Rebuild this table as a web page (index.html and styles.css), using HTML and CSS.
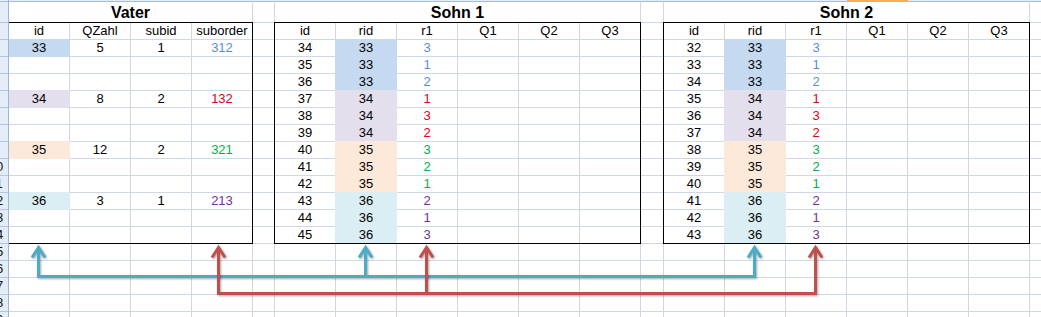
FILE: index.html
```html
<!DOCTYPE html>
<html lang="de">
<head>
<meta charset="utf-8">
<title>Vater / Sohn</title>
<link rel="stylesheet" href="styles.css">
</head>
<body>
<div class="sheet">
  <div class="rowhead">
    <div class="strip"></div>
    <div class="rh rh-title"><span>1</span></div>
    <div class="rh"><span>2</span></div>
    <div class="rh"><span>3</span></div>
    <div class="rh"><span>4</span></div>
    <div class="rh"><span>5</span></div>
    <div class="rh"><span>6</span></div>
    <div class="rh"><span>7</span></div>
    <div class="rh"><span>8</span></div>
    <div class="rh"><span>9</span></div>
    <div class="rh"><span>10</span></div>
    <div class="rh"><span>11</span></div>
    <div class="rh"><span>12</span></div>
    <div class="rh"><span>13</span></div>
    <div class="rh"><span>14</span></div>
    <div class="rh"><span>15</span></div>
    <div class="rh"><span>16</span></div>
    <div class="rh"><span>17</span></div>
    <div class="rh"><span>18</span></div>
    <div class="rh"><span>19</span></div>
  </div>

  <section class="block vater">
    <div class="strip"></div>
    <div class="title">Vater</div>
    <table class="grid">
      <tr><td>id</td><td>QZahl</td><td>subid</td><td>suborder</td></tr>
      <tr><td class="f b">33</td><td>5</td><td>1</td><td class="tb">312</td></tr>
      <tr><td></td><td></td><td></td><td></td></tr>
      <tr><td></td><td></td><td></td><td></td></tr>
      <tr><td class="f p">34</td><td>8</td><td>2</td><td class="tr">132</td></tr>
      <tr><td></td><td></td><td></td><td></td></tr>
      <tr><td></td><td></td><td></td><td></td></tr>
      <tr><td class="f o">35</td><td>12</td><td>2</td><td class="tg">321</td></tr>
      <tr><td></td><td></td><td></td><td></td></tr>
      <tr><td></td><td></td><td></td><td></td></tr>
      <tr><td class="f c">36</td><td>3</td><td>1</td><td class="tp">213</td></tr>
      <tr><td></td><td></td><td></td><td></td></tr>
      <tr><td></td><td></td><td></td><td></td></tr>
    </table>
    <div class="below"></div>
  </section>

  <div class="gap gap-e">
    <div class="strip"></div>
    <div class="gap-title"></div>
    <div class="gap-body"></div>
  </div>

  <section class="block sohn">
    <div class="strip"></div>
    <div class="title">Sohn 1</div>
    <table class="grid">
      <tr><td>id</td><td>rid</td><td>r1</td><td>Q1</td><td>Q2</td><td>Q3</td></tr>
      <tr><td>34</td><td class="f b">33</td><td class="tb">3</td><td></td><td></td><td></td></tr>
      <tr><td>35</td><td class="f b">33</td><td class="tb">1</td><td></td><td></td><td></td></tr>
      <tr><td>36</td><td class="f b">33</td><td class="tb">2</td><td></td><td></td><td></td></tr>
      <tr><td>37</td><td class="f p">34</td><td class="tr">1</td><td></td><td></td><td></td></tr>
      <tr><td>38</td><td class="f p">34</td><td class="tr">3</td><td></td><td></td><td></td></tr>
      <tr><td>39</td><td class="f p">34</td><td class="tr">2</td><td></td><td></td><td></td></tr>
      <tr><td>40</td><td class="f o">35</td><td class="tg">3</td><td></td><td></td><td></td></tr>
      <tr><td>41</td><td class="f o">35</td><td class="tg">2</td><td></td><td></td><td></td></tr>
      <tr><td>42</td><td class="f o">35</td><td class="tg">1</td><td></td><td></td><td></td></tr>
      <tr><td>43</td><td class="f c">36</td><td class="tp">2</td><td></td><td></td><td></td></tr>
      <tr><td>44</td><td class="f c">36</td><td class="tp">1</td><td></td><td></td><td></td></tr>
      <tr><td>45</td><td class="f c">36</td><td class="tp">3</td><td></td><td></td><td></td></tr>
    </table>
    <div class="below"></div>
  </section>

  <div class="gap gap-l">
    <div class="strip"></div>
    <div class="gap-title"></div>
    <div class="gap-body"></div>
  </div>

  <section class="block sohn">
    <div class="strip strip-sel"></div>
    <div class="title">Sohn 2</div>
    <table class="grid">
      <tr><td>id</td><td>rid</td><td>r1</td><td>Q1</td><td>Q2</td><td>Q3</td></tr>
      <tr><td>32</td><td class="f b">33</td><td class="tb">3</td><td></td><td></td><td></td></tr>
      <tr><td>33</td><td class="f b">33</td><td class="tb">1</td><td></td><td></td><td></td></tr>
      <tr><td>34</td><td class="f b">33</td><td class="tb">2</td><td></td><td></td><td></td></tr>
      <tr><td>35</td><td class="f p">34</td><td class="tr">1</td><td></td><td></td><td></td></tr>
      <tr><td>36</td><td class="f p">34</td><td class="tr">3</td><td></td><td></td><td></td></tr>
      <tr><td>37</td><td class="f p">34</td><td class="tr">2</td><td></td><td></td><td></td></tr>
      <tr><td>38</td><td class="f o">35</td><td class="tg">3</td><td></td><td></td><td></td></tr>
      <tr><td>39</td><td class="f o">35</td><td class="tg">2</td><td></td><td></td><td></td></tr>
      <tr><td>40</td><td class="f o">35</td><td class="tg">1</td><td></td><td></td><td></td></tr>
      <tr><td>41</td><td class="f c">36</td><td class="tp">2</td><td></td><td></td><td></td></tr>
      <tr><td>42</td><td class="f c">36</td><td class="tp">1</td><td></td><td></td><td></td></tr>
      <tr><td>43</td><td class="f c">36</td><td class="tp">3</td><td></td><td></td><td></td></tr>
    </table>
    <div class="below"></div>
  </section>

  <div class="gap rest">
    <div class="strip"></div>
    <div class="gap-title"></div>
    <div class="gap-body"></div>
  </div>

  <svg class="arrows" width="1041" height="317" viewBox="0 0 1041 317" aria-hidden="true">
    <g class="arrow arrow-cyan">
      <path d="M38.5 248 V276.5 H754.5 V248"/>
      <path d="M365.5 276.5 V248"/>
      <path d="M32 257.5 L38.5 247.5 L45 257.5"/>
      <path d="M359 257.5 L365.5 247.5 L372 257.5"/>
      <path d="M748 257.5 L754.5 247.5 L761 257.5"/>
    </g>
    <g class="arrow arrow-red">
      <path d="M218.5 248 V293.5 H815.5 V248"/>
      <path d="M426.5 293.5 V248"/>
      <path d="M212 257.5 L218.5 247.5 L225 257.5"/>
      <path d="M420 257.5 L426.5 247.5 L433 257.5"/>
      <path d="M809 257.5 L815.5 247.5 L822 257.5"/>
    </g>
  </svg>
</div>
</body>
</html>
```

FILE: styles.css
```css
html, body {
  margin: 0;
  padding: 0;
  background: #ffffff;
}

body {
  font-family: "Liberation Sans", Arial, sans-serif;
  font-size: 13px;
  color: #000000;
}

.sheet {
  position: relative;
  display: flex;
  width: 1041px;
  height: 317px;
  overflow: hidden;
  background: #ffffff;
}

/* column-header remnant at the very top */
.strip {
  height: 1px;
  flex: none;
  background: #e4ecf7;
}

.strip-sel {
  background: linear-gradient(to right, #e4ecf7 0 184px, #f5b14f 184px 245px, #e4ecf7 245px);
}

/* row headers (only their right edge is visible) */
.rowhead {
  flex: none;
  width: 9px;
  box-sizing: border-box;
  border-right: 1px solid #9eb6ce;
  background: #e4ecf7;
  display: flex;
  flex-direction: column;
}

.rh {
  flex: none;
  height: 17px;
  box-sizing: border-box;
  border-bottom: 1px solid #b4c6dc;
  display: flex;
  justify-content: flex-end;
  overflow: hidden;
}

.rh span {
  flex: none;
  width: 24px;
  text-align: center;
  line-height: 16px;
  font-size: 13px;
  color: #111111;
}

.rh-title {
  height: 22px;
  border-top: 1px solid #a9bcd4;
}

/* table blocks */
.block {
  flex: none;
  display: flex;
  flex-direction: column;
}

.vater { width: 244px; }
.sohn { width: 367px; }

.title {
  flex: none;
  height: 21px;
  box-sizing: border-box;
  border-top: 1px solid #a9bcd4;
  padding-top: 1px;
  line-height: 19px;
  text-align: center;
  font-size: 16px;
  font-weight: bold;
}

.vater .title { border-right: 1px solid #d0d7e5; }
.sohn .title {
  border-left: 1px solid #d0d7e5;
  border-right: 1px solid #d0d7e5;
}

.grid {
  flex: none;
  box-sizing: border-box;
  border-collapse: separate;
  border-spacing: 0;
  table-layout: fixed;
  border: 1px solid #000000;
}

.vater .grid {
  width: 244px;
  border-left: none;
}

.sohn .grid { width: 367px; }

.grid td {
  box-sizing: border-box;
  width: 61px;
  height: 17px;
  padding: 0;
  border-right: 1px solid #d0d7e5;
  border-bottom: 1px solid #d0d7e5;
  text-align: center;
  line-height: 16px;
  font-size: 13px;
  white-space: nowrap;
  overflow: hidden;
}

.grid td:last-child {
  width: 60px;
  border-right: none;
}

.grid tr:last-child td {
  height: 16px;
  border-bottom: none;
}

/* filled cells hide the surrounding gridlines */
.f.b { --fill: #c5d9f1; }
.f.p { --fill: #e4dfec; }
.f.o { --fill: #fde9d9; }
.f.c { --fill: #daeef3; }

.grid td.f {
  background: var(--fill);
  border-right-color: var(--fill);
  border-bottom-color: var(--fill);
  box-shadow: -1px 0 0 var(--fill), 0 -1px 0 var(--fill), -1px -1px 0 var(--fill);
}

.vater .grid td.f {
  box-shadow: 0 -1px 0 var(--fill);
}

.grid tr:last-child td.f { border-bottom: none; }

/* text colours */
.tb { color: #558ed5; }
.tr { color: #e2001a; }
.tg { color: #00b050; }
.tp { color: #7030a0; }

/* empty rows below the tables */
.below {
  flex: 1;
  background-image:
    linear-gradient(to top, #d0d7e5 1px, transparent 1px),
    linear-gradient(to left, #d0d7e5 1px, transparent 1px);
  background-size: 100% 17px, 61px 100%;
}

.sohn .below { border-left: 1px solid #d0d7e5; }

/* narrow spacer columns */
.gap {
  flex: none;
  display: flex;
  flex-direction: column;
}

.gap-e { width: 21px; }
.gap-l { width: 22px; }
.rest { flex: 1; }

.gap-title {
  flex: none;
  height: 22px;
  box-sizing: border-box;
  border-top: 1px solid #a9bcd4;
  border-bottom: 1px solid #d0d7e5;
}

.gap-body {
  flex: 1;
  background-image: linear-gradient(to top, #d0d7e5 1px, transparent 1px);
  background-size: 100% 17px;
}

/* connector arrows drawn over the sheet */
.arrows {
  position: absolute;
  left: 0;
  top: 0;
  pointer-events: none;
}

.arrow path {
  fill: none;
  stroke-width: 3;
  stroke-linejoin: miter;
  stroke-linecap: butt;
}

.arrow {
  filter: drop-shadow(1px 1.5px 1px rgba(0, 0, 0, 0.35));
}

.arrow-cyan path { stroke: #4bacc6; }
.arrow-red path { stroke: #c0504d; }
```
